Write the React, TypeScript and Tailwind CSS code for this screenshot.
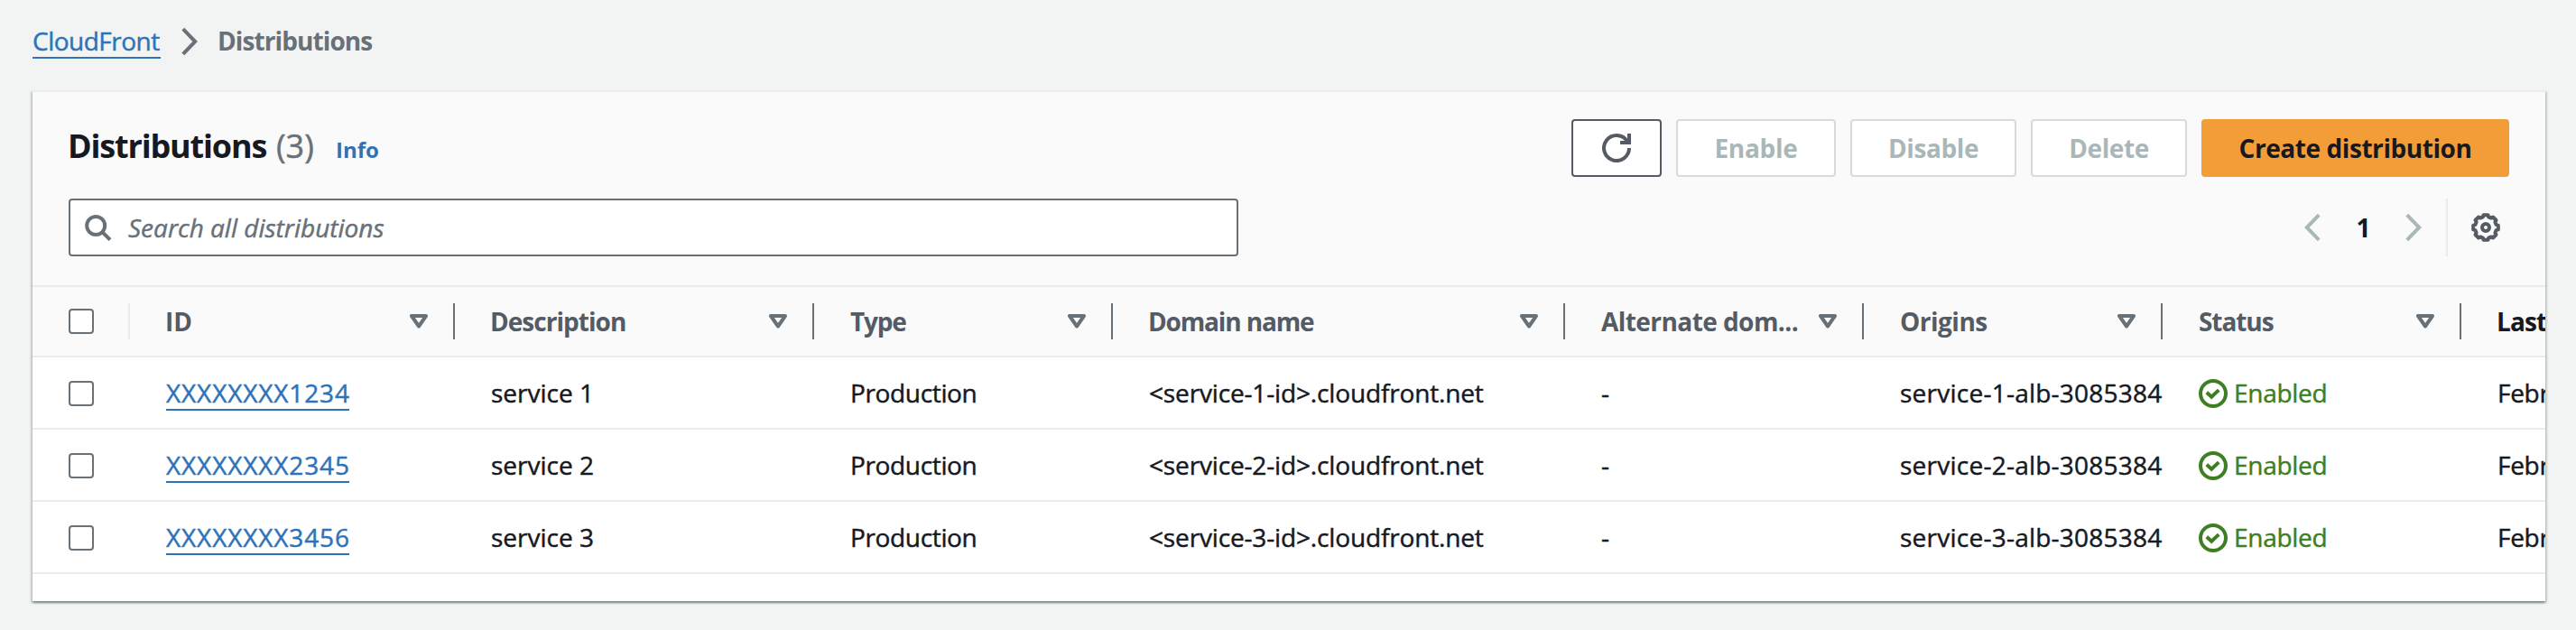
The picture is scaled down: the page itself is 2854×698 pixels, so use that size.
import React from 'react';

type Column = { label: string; width: string; spacing: string };

const columns: Column[] = [
  { label: 'ID', width: 'w-[360px]', spacing: 'pl-[39px]' },
  { label: 'Description', width: 'w-[398px]', spacing: 'pl-[39px] tracking-[-0.96px]' },
  { label: 'Type', width: 'w-[331px]', spacing: 'pl-10 tracking-[-1.2px]' },
  { label: 'Domain name', width: 'w-[501px]', spacing: 'pl-[39px] tracking-[-1.15px]' },
  { label: 'Alternate dom...', width: 'w-[331px]', spacing: 'pl-10 tracking-[-0.56px]' },
  { label: 'Origins', width: 'w-[331px]', spacing: 'pl-10 tracking-[-0.5px]' },
  { label: 'Status', width: 'w-[331px]', spacing: 'pl-10 tracking-[-1.08px]' },
];

const rows = [
  { id: 'XXXXXXXX1234', n: 1 },
  { id: 'XXXXXXXX2345', n: 2 },
  { id: 'XXXXXXXX3456', n: 3 },
];

function Chevron({ left = false, className }: { left?: boolean; className: string }) {
  return (
    <svg viewBox="0 0 18 32" className={`h-8 w-[18px] shrink-0 ${className}`} fill="none" stroke="currentColor" strokeWidth="4">
      <path d={left ? 'M16.2 2.2 2.8 16l13.4 13.8' : 'M1.8 2.2 15.2 16 1.8 29.8'} />
    </svg>
  );
}

function Gear() {
  const points: string[] = [];
  for (let i = 0; i < 8; i++) {
    const steps: [number, number][] = [[-10, 14], [10, 14], [15, 12], [30, 12]];
    for (const [offset, radius] of steps) {
      const angle = ((i * 45 + offset) * Math.PI) / 180;
      points.push(`${(16 + radius * Math.sin(angle)).toFixed(2)},${(16 - radius * Math.cos(angle)).toFixed(2)}`);
    }
  }
  return (
    <svg viewBox="0 0 32 32" className="ml-[26px] size-8 text-[#545b64]" fill="none" stroke="currentColor" strokeWidth="4" strokeLinejoin="round">
      <polygon points={points.join(' ')} />
      <circle cx="16" cy="16" r="4" />
    </svg>
  );
}

function Refresh() {
  return (
    <svg viewBox="0 0 32 32" className="size-8" fill="none" stroke="currentColor" strokeWidth="4">
      <path d="M30 16A14 14 0 1 1 27.6 8.2" />
      <path d="M30 0v10H20" />
    </svg>
  );
}

function SortIcon() {
  return (
    <svg viewBox="0 0 20 16" className="h-4 w-5 shrink-0 text-[#687078]" fill="none" stroke="currentColor" strokeWidth="4" strokeLinejoin="round">
      <path d="M2 2h16l-8 11.5z" />
    </svg>
  );
}

function Checkbox() {
  return <span className="block size-7 rounded-[4px] border-2 border-[#687078] bg-white" />;
}

function DisabledButton({ label, className }: { label: string; className: string }) {
  return (
    <button disabled className={`h-16 rounded-[4px] border-2 border-[#d5dbdb] bg-white pb-px font-bold text-[#aab7b8] ${className}`}>
      {label}
    </button>
  );
}

export default function App() {
  return (
    <div className="h-[698px] w-[2854px] overflow-hidden bg-[#f2f3f3] px-[36px] pr-[34px] font-['Open_Sans','Noto_Sans',sans-serif] text-[28px] leading-10 whitespace-nowrap text-[#16191f] [-webkit-text-stroke:0.45px]">
      <nav className="flex h-[100px] items-start pt-[25px]">
        <a className="h-10 w-[142px] border-b-2 border-[#2e73b8] tracking-[-0.5px] text-[#2e73b8]">CloudFront</a>
        <Chevron className="mt-[5px] ml-[23px] text-[#687078]" />
        <span className="ml-[22px] font-bold tracking-[-0.9px] text-[#687078] [-webkit-text-stroke:0]">Distributions</span>
      </nav>

      <main className="h-[566px] border-t-2 border-[#eaeded] bg-white shadow-[0_2px_2px_0_rgba(0,28,36,0.3),2px_2px_2px_0_rgba(0,28,36,0.15),-2px_2px_2px_0_rgba(0,28,36,0.15)]">
        <header className="h-[216px] border-b-2 border-[#eaebeb] bg-[#fafafa] pt-[30px] pr-10 pl-10">
          <div className="flex h-16 items-start">
            <h1 className="mt-[6px] -ml-px flex items-baseline leading-[48px]">
              <span className="w-[231px] text-[36px] font-bold tracking-[-1.17px] [-webkit-text-stroke:0]">Distributions</span>
              <span className="w-[66px] text-[36px] text-[#687078]">(3)</span>
              <a className="text-[24px] font-bold text-[#2e73b8] [-webkit-text-stroke:0]">Info</a>
            </h1>
            <div className="ml-auto flex gap-4 [-webkit-text-stroke:0]">
              <button className="flex h-16 w-[100px] items-center justify-center rounded-[4px] border-2 border-[#545b64] bg-white text-[#545b64]">
                <Refresh />
              </button>
              <DisabledButton label="Enable" className="w-[177px] tracking-[-0.26px]" />
              <DisabledButton label="Disable" className="w-[184px] tracking-[-0.4px]" />
              <DisabledButton label="Delete" className="w-[173px] tracking-[-0.42px]" />
              <button className="h-16 w-[341px] rounded-[4px] bg-[#f29d38] pb-px font-bold tracking-[-0.43px]">Create distribution</button>
            </div>
          </div>
          <div className="mt-6 flex h-16 items-center">
            <div className="flex h-16 w-[1296px] items-center rounded-[4px] border-2 border-[#687078] bg-white pl-4 text-[#687078]">
              <svg viewBox="0 0 32 32" className="size-8" fill="none" stroke="currentColor" strokeWidth="4">
                <circle cx="12.2" cy="14" r="10" />
                <path d="m19.2 21 8.8 8.6" />
              </svg>
              <span className="ml-4 italic">Search all distributions</span>
            </div>
            <div className="ml-auto flex h-16 items-center pr-[10px]">
              <Chevron left className="text-[#aab7b8]" />
              <span className="w-[94px] pl-px text-center font-bold [-webkit-text-stroke:0]">1</span>
              <Chevron className="text-[#aab7b8]" />
              <span className="ml-[27px] h-16 w-[2px] bg-[#eaebeb]" />
              <Gear />
            </div>
          </div>
        </header>

        <div className="overflow-hidden">
          <div className="flex h-[78px] border-b-2 border-[#eaebeb] bg-[#fafafa] font-bold text-[#545b64] [-webkit-text-stroke:0]">
            <div className="flex w-[108px] shrink-0 items-center pl-10">
              <Checkbox />
              <span className="ml-auto h-10 w-[2px] bg-[#eaebeb]" />
            </div>
            {columns.map((c) => (
              <div key={c.label} className={`flex shrink-0 items-center ${c.width} ${c.spacing}`}>
                <span className="pb-px">{c.label}</span>
                <span className="ml-auto flex items-center gap-7">
                  <SortIcon />
                  <span className="h-10 w-[2px] bg-[#687078]" />
                </span>
              </div>
            ))}
            <div className="flex shrink-0 items-center pb-px pl-[39px] tracking-[-0.9px] text-[#16191f]">Last modified</div>
          </div>

          {rows.map(({ id, n }) => (
            <div key={id} className="flex h-20 items-center border-b-2 border-[#eaebeb]">
              <div className="w-[108px] shrink-0 pt-[2px] pl-10">
                <Checkbox />
              </div>
              <div className="w-[360px] shrink-0 pl-10">
                <a className="block h-10 w-[203px] border-b-2 border-[#2e73b8] tracking-[0.87px] text-[#2e73b8]">{id}</a>
              </div>
              <div className="w-[398px] shrink-0 pl-10">service {n}</div>
              <div className="w-[331px] shrink-0 pl-10 tracking-[-0.35px]">Production</div>
              <div className="w-[501px] shrink-0 pl-10 tracking-[-0.15px]">{`<service-${n}-id>.cloudfront.net`}</div>
              <div className="w-[331px] shrink-0 pl-10">-</div>
              <div className="w-[331px] shrink-0 pl-10 tracking-[0.24px]">{`service-${n}-alb-3085384`}</div>
              <div className="flex w-[331px] shrink-0 items-center pl-10 text-[#3d7f22]">
                <svg viewBox="0 0 32 32" className="mt-[2px] size-8" fill="none" stroke="currentColor" strokeWidth="4">
                  <circle cx="16" cy="16" r="14" />
                  <path d="m8.8 14.8 5.4 4.9 8-7.6" />
                </svg>
                <span className="ml-[7px] tracking-[-0.3px]">Enabled</span>
              </div>
              <div className="shrink-0 pl-10 tracking-[-0.3px]">February</div>
            </div>
          ))}
        </div>
      </main>
    </div>
  );
}
